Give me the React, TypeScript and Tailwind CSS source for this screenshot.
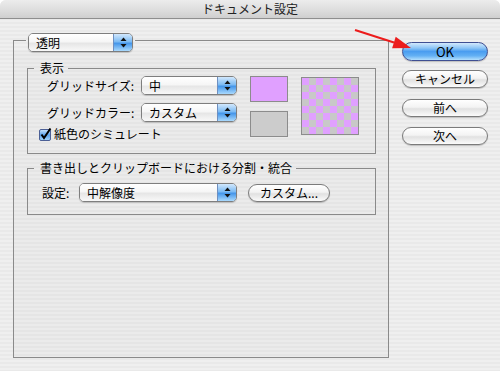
import React from "react";

const CHECKER = Array.from({ length: 64 }, (_, i) => (Math.floor(i / 8) + (i % 8)) % 2 === 0);

export default function App() {
  return (
    <div className="relative h-[371px] w-[500px] overflow-hidden bg-white font-['Noto_Sans_CJK_JP','DejaVu_Sans',sans-serif] text-[12px] text-black">
      <div className="flex h-full flex-col overflow-hidden rounded-t-[6px] bg-[image:repeating-linear-gradient(180deg,#efefef_0px,#efefef_2px,#e9e9e9_2px,#e9e9e9_4px)]">
        {/* title bar */}
        <div className="flex h-[19px] shrink-0 items-center justify-center border-b border-[#8e8e8e] bg-[image:linear-gradient(180deg,#ececec_0%,#dcdcdc_60%,#cfcfcf_100%)] text-[12px] leading-none text-[#222]">
          ドキュメント設定
        </div>

        <div className="flex flex-1 pl-[13px] pt-[14px]">
          {/* main group */}
          <div className="flex h-[325px] w-[376px] flex-col">
            <div className="flex h-[18px]">
              <div className="mr-[2px] h-[11px] w-[13px] self-end border-l border-t border-[#8a8a8a]" />
              <Popup label="透明" className="w-[105px]" />
              <div className="ml-[2px] h-[11px] flex-1 self-end border-r border-t border-[#8a8a8a]" />
            </div>
            <div className="flex-1 border-x border-b border-[#8a8a8a] bg-black/[0.015] pl-[13px] pr-[12px] pt-[9px]">
              {/* 表示 */}
              <GroupHeader title="表示" />
              <div className="flex border-x border-b border-[#8a8a8a] pb-[12px]">
                <div className="flex flex-col">
                  <div className="flex h-[19px] items-center pl-[19px]">
                    <span className="w-[94px] leading-none">グリッドサイズ:</span>
                    <Popup label="中" className="w-[96px]" />
                  </div>
                  <div className="mt-[8px] flex h-[19px] items-center pl-[19px]">
                    <span className="w-[94px] leading-none">グリッドカラー:</span>
                    <Popup label="カスタム" className="w-[96px]" />
                  </div>
                  <div className="mt-[5px] flex h-[14px] items-center pl-[11px]">
                    <Checkbox />
                    <span className="ml-[2px] leading-none">紙色のシミュレート</span>
                  </div>
                </div>
                <div className="ml-[13px] flex flex-col">
                  <div className="h-[26px] w-[38px] border border-[#8c8c8c] bg-[#e0a0ff]" />
                  <div className="mt-[9px] h-[26px] w-[38px] border border-[#8c8c8c] bg-[#cccccc]" />
                </div>
                <div className="ml-[13px] mt-[1px] grid h-[58px] w-[58px] grid-cols-8 border border-[#8c8c8c]">
                  {CHECKER.map((p, i) => (
                    <div key={i} className={p ? "bg-[#e0a0ff]" : "bg-[#c8c8c8]"} />
                  ))}
                </div>
              </div>

              {/* 書き出し */}
              <div className="mt-[6px]">
                <GroupHeader title="書き出しとクリップボードにおける分割・統合" />
              </div>
              <div className="flex border-x border-b border-[#8a8a8a] pb-[12px] pl-[14px] pt-[7px]">
                <div className="flex h-[19px] items-center">
                  <span className="w-[37px] leading-none">設定:</span>
                  <Popup label="中解像度" className="w-[158px]" />
                  <PushButton label="カスタム..." className="ml-[11px] h-[18px] w-[82px]" />
                </div>
              </div>
            </div>
          </div>

          {/* buttons */}
          <div className="ml-[13px] flex w-[86px] flex-col pt-[9px]">
            <PushButton label="OK" primary className="h-[19px] text-[13px]" />
            <PushButton label="キャンセル" className="mt-[9px] h-[18px]" />
            <PushButton label="前へ" className="mt-[11px] h-[18px]" />
            <PushButton label="次へ" className="mt-[10px] h-[18px]" />
          </div>
        </div>
      </div>

      {/* red annotation arrow */}
      <svg className="pointer-events-none absolute left-0 top-0" width="500" height="371">
        <line x1="355" y1="30" x2="394" y2="42.5" stroke="#ec1c1c" strokeWidth="2" />
        <path d="M411 48 L392.1 48.2 L395.7 36.8 Z" fill="#ec1c1c" />
      </svg>
    </div>
  );
}

function GroupHeader({ title }: { title: string }) {
  return (
    <div className="flex h-[16px]">
      <div className="h-[8px] w-[7px] self-end border-l border-t border-[#8a8a8a]" />
      <span className="pl-[6px] pr-[4px] leading-[16px]">{title}</span>
      <div className="h-[8px] flex-1 self-end border-r border-t border-[#8a8a8a]" />
    </div>
  );
}

function Popup({ label, className }: { label: string; className: string }) {
  return (
    <div
      className={`flex h-[19px] overflow-hidden rounded-[5px] border border-[#7e7e7e] shadow-[0_1px_1px_rgba(0,0,0,0.18)] ${className}`}
    >
      <div className="flex flex-1 items-center bg-[image:linear-gradient(180deg,#ffffff_0%,#f6f6f6_45%,#e6e6e6_55%,#f8f8f8_100%)] pl-[7px] leading-none">
        {label}
      </div>
      <div className="flex w-[19px] items-center justify-center border-l border-[#6e8fc0] bg-[image:linear-gradient(180deg,#d2e8fd_0%,#7dbbf3_45%,#4596ea_55%,#a9d9fd_100%)]">
        <svg width="7" height="11" viewBox="0 0 7 11">
          <path d="M3.5 0.5L6.5 4H0.5Z" fill="#111" />
          <path d="M0.5 7H6.5L3.5 10.5Z" fill="#111" />
        </svg>
      </div>
    </div>
  );
}

function PushButton({ label, primary, className }: { label: string; primary?: boolean; className: string }) {
  return (
    <div
      className={[
        "flex items-center justify-center rounded-full border leading-none shadow-[0_1px_1px_rgba(0,0,0,0.2)]",
        primary
          ? "border-[#3f4f92] bg-[image:linear-gradient(180deg,#d3e9fd_0%,#8cc5f6_30%,#4a9df0_50%,#63b0f4_75%,#b4e0fd_100%)]"
          : "border-[#7b7b7b] bg-[image:linear-gradient(180deg,#ffffff_0%,#f3f3f3_45%,#e1e1e1_55%,#fbfbfb_100%)]",
        className,
      ].join(" ")}
    >
      {label}
    </div>
  );
}

function Checkbox() {
  return (
    <svg width="13" height="13" viewBox="0 0 13 13" className="shrink-0">
      <defs>
        <linearGradient id="cb" x1="0" y1="0" x2="0" y2="1">
          <stop offset="0" stopColor="#cfe6fd" />
          <stop offset="0.5" stopColor="#5aa2ee" />
          <stop offset="1" stopColor="#a6d6fc" />
        </linearGradient>
      </defs>
      <rect x="0.5" y="1.5" width="11" height="11" rx="1.5" fill="url(#cb)" stroke="#4b5f95" />
      <path d="M2.5 6.5 L5 10 L11.5 0.5" fill="none" stroke="#000" strokeWidth="2" />
    </svg>
  );
}
